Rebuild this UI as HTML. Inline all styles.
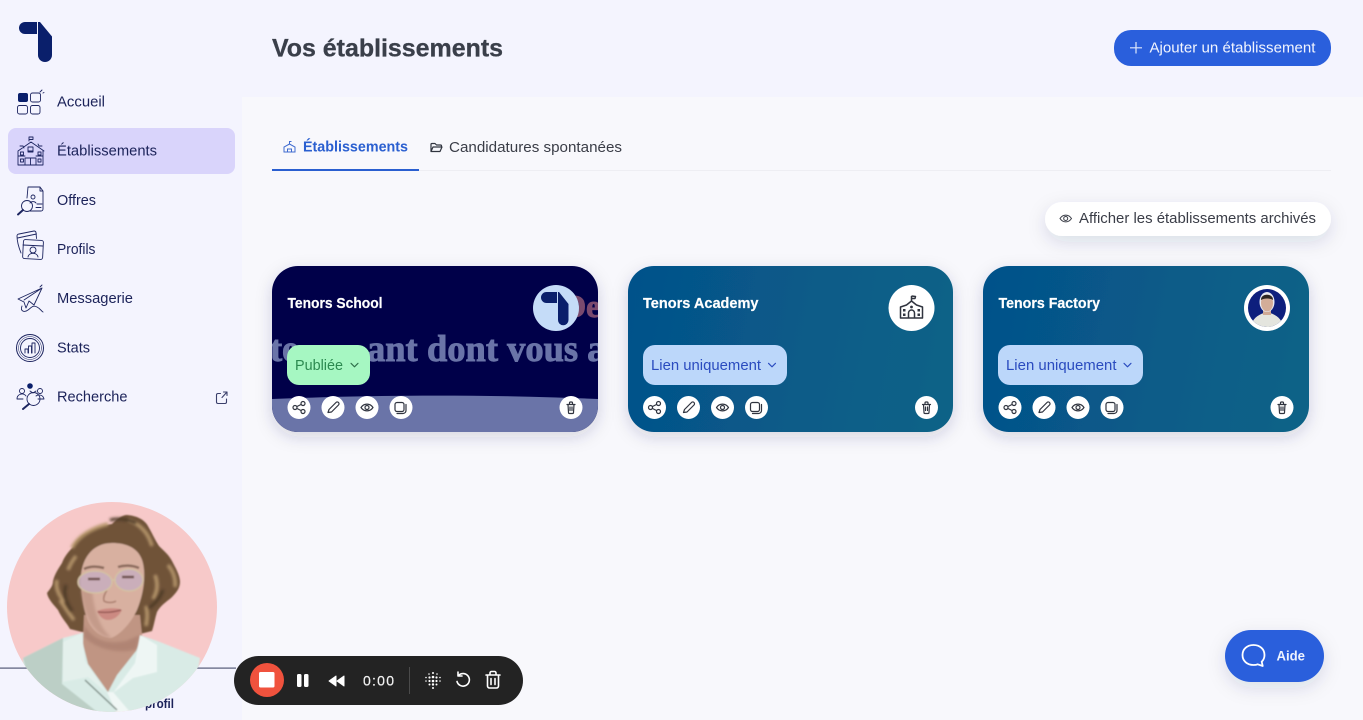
<!DOCTYPE html>
<html lang="fr">
<head>
<meta charset="utf-8">
<title>Vos établissements</title>
<style>
html,body{margin:0;padding:0;width:1363px;height:720px;overflow:hidden;background:#f4f4fe}
svg{display:block;position:absolute;left:0;top:0}
text{font-family:"Liberation Sans",sans-serif}
.nav{font-size:15px;fill:#1b2259}
.ic{fill:none;stroke:#1d2560;stroke-width:.9;stroke-linejoin:round;stroke-linecap:round}
.ac{fill:none;stroke:#30343f;stroke-width:1.2;stroke-linejoin:round;stroke-linecap:round}
.srf{font-family:"Liberation Serif",serif;font-weight:700;stroke-width:.9}
</style>
</head>
<body>
<svg width="1363" height="720" viewBox="0 0 1363 720" xmlns="http://www.w3.org/2000/svg">
<defs>
<linearGradient id="cg" x1="0" y1="0" x2="1" y2="0.1"><stop offset="0" stop-color="#05518a"/><stop offset="1" stop-color="#0a6287"/></linearGradient>
<filter id="sh" x="-20%" y="-20%" width="140%" height="150%"><feDropShadow dx="0" dy="5" stdDeviation="8" flood-color="#1c2a55" flood-opacity=".17"/></filter>
<filter id="sh2" x="-20%" y="-80%" width="140%" height="300%"><feDropShadow dx="0" dy="6" stdDeviation="9" flood-color="#1c2a55" flood-opacity=".13"/></filter>
<filter id="b1"><feGaussianBlur stdDeviation="1.300"/></filter>
<filter id="b2"><feGaussianBlur stdDeviation=".7"/></filter>
<clipPath id="c1"><rect x="272" y="266" width="326" height="166" rx="26"/></clipPath>
<clipPath id="vid"><circle cx="112" cy="607" r="105"/></clipPath>
<clipPath id="c3"><circle cx="1267" cy="308" r="19"/></clipPath>
<g id="acts">
  <circle cx="27" cy="0" r="11.500" fill="#fff"/><circle cx="61" cy="0" r="11.500" fill="#fff"/><circle cx="95" cy="0" r="11.500" fill="#fff"/><circle cx="129" cy="0" r="11.500" fill="#fff"/><circle cx="299" cy="0" r="11.500" fill="#fff"/>
  <g class="ac">
    <circle cx="23" cy="0" r="2"/><circle cx="31" cy="-4" r="2"/><circle cx="31" cy="4" r="2"/><path d="M25-1l4-2M25 1l4 2"/>
    <path d="M56 5l1-3 7-7a1.500 1.500 0 0 1 2.500 2.500l-7 7z"/>
    <path d="M89 0c3-4.500 9-4.500 12 0c-3 4.500-9 4.500-12 0z"/><circle cx="95" cy="0" r="2"/>
    <rect x="123" y="-5" width="9" height="9" rx="2"/><path d="M134-3v6a3 3 0 0 1-3 3h-6"/>
    <path d="M295-3h8M297.500-3v-1.500a1 1 0 0 1 1-1h1a1 1 0 0 1 1 1V-3M296-3l.5 8a1 1 0 0 0 1 1h3a1 1 0 0 0 1-1l.5-8M298 -.5v3.500M300-.5v3.500"/>
  </g>
</g>
<path id="chev" d="M-3.500-1.700l3.500 3.500 3.500-3.500" fill="none" stroke-width="1.100" stroke-linecap="round" stroke-linejoin="round"/>
</defs>

<!-- backgrounds -->
<rect width="1363" height="720" fill="#f4f4fe"/>
<rect x="242" y="97" width="1121" height="623" fill="#f8f8fc"/>

<!-- logo -->
<path d="M25 22h12v12H25a6 6 0 0 1 0-12z" fill="#0a1f6b"/>
<path d="M38 22h2l12 14.500v18.500a7 7 0 0 1-14 0z" fill="#0a1f6b"/>

<!-- sidebar -->
<rect x="8" y="128" width="227" height="46" rx="8" fill="#d9d4fb"/>
<text class="nav" x="57" y="106.500" textLength="48" lengthAdjust="spacingAndGlyphs">Accueil</text>
<text class="nav" x="57" y="155.500" textLength="100" lengthAdjust="spacingAndGlyphs">Établissements</text>
<text class="nav" x="57" y="205" textLength="39" lengthAdjust="spacingAndGlyphs">Offres</text>
<text class="nav" x="57" y="254" textLength="38.500" lengthAdjust="spacingAndGlyphs">Profils</text>
<text class="nav" x="57" y="303" textLength="76" lengthAdjust="spacingAndGlyphs">Messagerie</text>
<text class="nav" x="57" y="352.500" textLength="33" lengthAdjust="spacingAndGlyphs">Stats</text>
<text class="nav" x="57" y="401.500" textLength="70.500" lengthAdjust="spacingAndGlyphs">Recherche</text>

<!-- nav icons -->
<rect x="18" y="93" width="10" height="9" rx="2" fill="#0a1f6b"/>
<g class="ic">
<rect x="30.500" y="93" width="10" height="9" rx="2"/><rect x="17.500" y="105.500" width="10" height="8.500" rx="2"/><rect x="30.500" y="105.500" width="9.500" height="8.500" rx="2"/>
<path d="M40 92l2-2M43 93l1-.5"/>
<!-- school -->
<path d="M29 141v-4h4v2.500h-4M18 151l13-9 13 9M20 146h3l1 2M42 146h-3l-1-2M18 151v14h25v-14M25 165v-7h11v7M30.500 158v7M28 151h5M18 156h7M36 156h7"/>
<rect x="28" y="147" width="5" height="5"/><rect x="20.500" y="152" width="3" height="3"/><rect x="38" y="152" width="3" height="3"/><rect x="20.500" y="159" width="3" height="3"/><rect x="38" y="159" width="3" height="3"/>
<!-- offres -->
<path d="M27 198l1-11h12l3 4v18a2 2 0 0 1-2 2H30M40 187v4h3"/><path d="M31 197a2 2 0 1 1 4 0 2 2 0 1 1-4 0M30 203a3.500 3 0 0 1 6 0M37 204h5M36 207.500h5"/>
<circle cx="27" cy="206" r="5.500"/><path d="M23 210l-5 4.500" stroke-width="2"/>
<!-- profils -->
<path d="M21 253c-2-5-4-12-4-17a2 2 0 0 1 2-2l15-3a2 2 0 0 1 2 1.500l.5 6M17.500 238l19-4"/>
<rect x="23" y="240" width="20" height="19" rx="2" transform="rotate(3 33 250)"/><path d="M23 245l20 1"/><circle cx="33" cy="250" r="3"/><path d="M28 257c1-5 9-5 10 0"/>
<!-- messagerie -->
<path d="M18 299l24-11-8 17-5-4-3 7-2-6zM42 288l-18 12M40 287l2-2M22 306c-2 5 2 7 6 4s5-5 9-3 4 4 6 5"/>
<!-- stats -->
<circle cx="30" cy="348" r="13.500" stroke-width="1"/><circle cx="30" cy="348" r="9.500"/><circle cx="30" cy="348" r="11.500" stroke-width=".5"/>
<path d="M25 353v-4h3v4M28.500 353v-7h3v7M32 353v-10h3v10"/>
<!-- recherche -->
<circle cx="22" cy="391" r="2.500"/><circle cx="40" cy="391" r="2.500"/><path d="M17 399a5 5 0 0 1 9-3M36 396a5 5 0 0 1 8 3h-6M17 399h6"/>
<circle cx="33.500" cy="399" r="6.500"/><path d="M29 404l-6 5" stroke-width="2"/><path d="M30 391l3 2 3-2"/>
</g>
<circle cx="30" cy="386" r="2.800" fill="#0a1f6b"/>
<g fill="none" stroke="#3a3f6b" stroke-width="1.100" stroke-linecap="round" stroke-linejoin="round"><path d="M220.500 393.500H218a1.500 1.500 0 0 0-1.500 1.500v7a1.500 1.500 0 0 0 1.500 1.500h7a1.500 1.500 0 0 0 1.500-1.500v-3M222 397.500l5-5.500M223.500 392h3.500v3.500"/></g>

<!-- header -->
<text x="272" y="56.500" font-size="25" font-weight="700" fill="#3a3f4a" stroke="#3a3f4a" stroke-width=".3" textLength="231" lengthAdjust="spacingAndGlyphs">Vos établissements</text>
<rect x="1114" y="30" width="217" height="36" rx="17" fill="#2a5fdc"/>
<path d="M1136 42v11.500M1130 47.800h12" stroke="#dfe8fb" stroke-width="1.200"/>
<text x="1149.500" y="52.500" font-size="15" fill="#f2f5fe" textLength="166" lengthAdjust="spacingAndGlyphs">Ajouter un établissement</text>

<!-- tabs -->
<rect x="272" y="170" width="1059" height="1" fill="#eeeef3"/>
<rect x="272" y="169" width="147" height="2" fill="#2a5fd0"/>
<g fill="none" stroke="#3f6bd0" stroke-width="1"><path d="M284 152v-5l5.500-3 5.500 3v5zM289.500 144v-2.500h2M287.500 152v-3h4v3"/></g>
<text x="303" y="151.500" font-size="15" font-weight="700" fill="#2a5fd0" textLength="105" lengthAdjust="spacingAndGlyphs">Établissements</text>
<g fill="none" stroke="#30343f" stroke-width="1.200" stroke-linejoin="round"><path d="M431 151.500v-7a1 1 0 0 1 1-1h3l1.500 1.500h4a1 1 0 0 1 1 1v1M431 151.500l2-4.500h9l-2 4.500z"/></g>
<text x="449" y="152" font-size="15" fill="#3a3d47" textLength="173" lengthAdjust="spacingAndGlyphs">Candidatures spontanées</text>

<!-- archived -->
<rect x="1045" y="202" width="286" height="34" rx="17" fill="#fff" filter="url(#sh2)"/>
<g fill="none" stroke="#3a3d47" stroke-width="1"><path d="M1060 218.500c3-4.500 8.500-4.500 11.500 0c-3 4.500-8.500 4.500-11.500 0z"/><circle cx="1065.700" cy="218.500" r="2"/></g>
<text x="1079" y="223" font-size="15" fill="#3a3d47" textLength="237" lengthAdjust="spacingAndGlyphs">Afficher les établissements archivés</text>

<!-- card 1 -->
<rect x="272" y="266" width="326" height="166" rx="26" fill="#03034a" filter="url(#sh)"/>
<g clip-path="url(#c1)">
<path d="M272 399C370 395 480 394 598 399V432H272z" fill="#6a74a8"/>
<text class="srf" x="270" y="361" font-size="36.500" fill="#6a74a8" stroke="#6a74a8">te</text>
<text class="srf" x="367" y="361" font-size="36.500" fill="#6a74a8" stroke="#6a74a8">ant</text>
<text class="srf" x="427" y="361" font-size="36.500" fill="#6a74a8" stroke="#6a74a8">dont vous a</text>
<text class="srf" x="563" y="317" font-size="32" fill="#7a4a6e" stroke="#7a4a6e">De</text>
</g>
<text x="287.500" y="308" font-size="14.500" font-weight="700" fill="#fff" stroke="#fff" stroke-width=".2" textLength="95" lengthAdjust="spacingAndGlyphs">Tenors School</text>
<circle cx="556" cy="308" r="23" fill="#c5dcf8"/>
<path d="M546.500 292h10.500v11h-10.500a5.500 5.500 0 0 1 0-11z" fill="#0a1f6b"/>
<path d="M558 292h1l9.500 12v16a5.250 5.250 0 0 1-10.500 0z" fill="#0a1f6b"/>
<rect x="287" y="345" width="83" height="40" rx="12" fill="#a6f7c2"/>
<text x="295" y="370" font-size="15" fill="#2c8a50" textLength="48" lengthAdjust="spacingAndGlyphs">Publiée</text>
<use href="#chev" x="354.500" y="365" stroke="#2f6f4a"/>
<use href="#acts" x="272" y="407.500"/>

<!-- card 2 -->
<rect x="628" y="266" width="325" height="166" rx="26" fill="url(#cg)" filter="url(#sh)"/>
<text x="643" y="308" font-size="14.500" font-weight="700" fill="#fff" stroke="#fff" stroke-width=".2" textLength="115.500" lengthAdjust="spacingAndGlyphs">Tenors Academy</text>
<circle cx="911.500" cy="308" r="23" fill="#fff"/>
<g fill="none" stroke="#30343f" stroke-width="1.500" stroke-linejoin="round"><path d="M900.500 318v-11l6-2 5-4 5 4 6 2v11zM911.500 301v-5M911.500 296l4 .5-.5 2h-3.500M908.500 318v-5a3 3 0 0 1 6 0v5"/></g>
<g fill="#30343f"><rect x="903" y="309" width="2.500" height="2.500"/><rect x="903" y="313.500" width="2.500" height="2.500"/><rect x="917.500" y="309" width="2.500" height="2.500"/><rect x="917.500" y="313.500" width="2.500" height="2.500"/><circle cx="911.500" cy="307" r="1.400"/></g>
<rect x="643" y="345" width="144" height="40" rx="12" fill="#bcd7fa"/>
<text x="651" y="370" font-size="15" fill="#2a4bbf" textLength="110" lengthAdjust="spacingAndGlyphs">Lien uniquement</text>
<use href="#chev" x="772" y="365" stroke="#2a4bbf"/>
<use href="#acts" x="627.500" y="407.500"/>

<!-- card 3 -->
<rect x="983" y="266" width="326" height="166" rx="26" fill="url(#cg)" filter="url(#sh)"/>
<text x="998.500" y="308" font-size="14.500" font-weight="700" fill="#fff" stroke="#fff" stroke-width=".2" textLength="101.500" lengthAdjust="spacingAndGlyphs">Tenors Factory</text>
<circle cx="1267" cy="308" r="23" fill="#fff"/>
<circle cx="1267" cy="308" r="19" fill="#0d1f7d"/>
<g clip-path="url(#c3)">
<path d="M1250 330c1-10 7-15 14-17h6c7 2 13 7 14 17z" fill="#e4e5de"/>
<rect x="1263" y="308" width="8" height="7" fill="#cfa994"/>
<ellipse cx="1267" cy="302" rx="7.500" ry="10" fill="#e8eaf2"/>
<ellipse cx="1267" cy="303" rx="6" ry="8.500" fill="#d3ad98"/>
<path d="M1261 300c-.5-7 12.500-7 12 0-3-2-9-2-12 0z" fill="#2c2522"/>
</g>
<rect x="998" y="345" width="145" height="40" rx="12" fill="#bcd7fa"/>
<text x="1006" y="370" font-size="15" fill="#2a4bbf" textLength="110.500" lengthAdjust="spacingAndGlyphs">Lien uniquement</text>
<use href="#chev" x="1127.500" y="365" stroke="#2a4bbf"/>
<use href="#acts" x="983" y="407.500"/>

<!-- sidebar bottom -->
<rect x="0" y="667.500" width="236" height="1.200" fill="#555a78"/>
<text x="145" y="708" font-size="12.500" font-weight="700" fill="#1b2259" textLength="29" lengthAdjust="spacingAndGlyphs">profil</text>

<!-- video bubble -->
<circle cx="112" cy="607" r="105" fill="#f7c9c9"/>
<g clip-path="url(#vid)">
<g filter="url(#b2)">
<!-- hair -->
<path d="M127 515c12 1 19 6 22 13 4 7 6 12 10 18 5 5 10 9 13 15 3 6 8 14 8 21 0 7-5 12-9 16-5 4-11 8-14 14-2 6-3 13-5 19l-12 3-58-2-12-3c-3-6-8-10-12-19-5-6-10-11-11-17 3-4 6-7 6-12 2-8 6-13 9-18 2-6 7-12 11-16 2-6 8-12 15-15 8-5 18-7 24-8 5-5 10-9 15-9z" fill="#6f5238"/>
<path d="M72 548c6-12 20-20 36-24M128 520c12 4 20 12 24 26M57 580c-2 8 2 16 8 22M60 600c4 6 8 12 14 20M168 565c5 6 8 14 7 22M155 575c3 8 3 16-2 24M146 606c2 8 1 14 0 20M68 570c2-6 5-10 8-14" fill="none" stroke="#b5956b" stroke-width="3.500" filter="url(#b1)"/>
<path d="M66 585c-3 8 0 18 6 26M163 590c-3 8-8 14-14 18M110 520c8-2 18-1 26 3" fill="none" stroke="#4e3a28" stroke-width="3" filter="url(#b1)"/>
<!-- shirt -->
<path d="M23 658l40-20 19-5 58 2 20 7 40 16-10 70H20z" fill="#d9ebe6"/>
<path d="M23 658l40-20-1 46 48 38H40z" fill="#bccfc6"/>
<!-- neck -->
<path d="M84 615h56l2 20-6 16-19 24-9 17-20-28-5-20z" fill="#c09583"/>
<path d="M84 625c8 14 22 20 42 16l14-6-3 14c-10 4-36 4-53-12z" fill="#a67a6b" opacity=".6" filter="url(#b1)"/>
<!-- collar -->
<path d="M82 633l-19 9v40l25-5 19 16-22-32z" fill="#e4f0ec"/>
<path d="M140 635l17 10v27l-24 6-20 15 22-30z" fill="#eef6f4"/>
<path d="M107 692l11 24 12-4-17-20z" fill="#f0f7f5"/>
<path d="M85 680l32 30" stroke="#75857e" stroke-width="1.300" fill="none"/>
<!-- face -->
<path d="M112 543c20 0 31 9 32 27 1 14-2 28-7 40-6 13-17 25-26 28-8 0-18-6-23-17-4-10-6-22-7-35-2-22 8-43 31-43z" fill="#d8b0a0"/>
<path d="M81 590c2 20 9 40 25 47l6 1c-11-8-18-26-20-48z" fill="#b78c7c" opacity=".6" filter="url(#b1)"/>
<!-- mouth -->
<path d="M97 611c6-3 20-4 25-1-3 6-8 10-14 10-5 0-9-4-11-9z" fill="#cc8a82"/>
<path d="M98 612c8 1 16 0 23-2" fill="none" stroke="#8c4f4b" stroke-width="1.200"/>
<!-- nose -->
<path d="M107 590c-3 5-4 8-3 11 3 2 9 2 12 0" fill="none" stroke="#aa7e6e" stroke-width="1.500"/>
<!-- eyebrows -->
<path d="M84 569c6-3 13-3 20-1M118 567c6-2 14-2 21 1" stroke="#8a6a5c" stroke-width="2.500" fill="none"/>
<!-- glasses -->
<ellipse cx="95" cy="582" rx="17" ry="11" fill="#c9aebc" opacity=".9"/>
<ellipse cx="129" cy="580" rx="14" ry="11" fill="#c9aebc" opacity=".9"/>
<ellipse cx="95" cy="582" rx="17" ry="11" fill="none" stroke="#d4c3a2" stroke-width="1.300"/>
<ellipse cx="129" cy="580" rx="14" ry="11" fill="none" stroke="#d4c3a2" stroke-width="1.300"/>
<path d="M112 580h3" stroke="#d4c3a2" stroke-width="1.500"/>
<path d="M88 579h12M122 577h12" stroke="#6e5350" stroke-width="2.500"/>
</g>
</g>

<!-- recorder -->
<rect x="234" y="656" width="289" height="49" rx="24.500" fill="#232323"/>
<circle cx="267" cy="680" r="17" fill="#f0523d"/>
<rect x="259" y="672" width="15.500" height="15.500" rx="1.500" fill="#fff"/>
<rect x="297" y="674" width="4.500" height="13" rx="1.500" fill="#fff"/>
<rect x="304" y="674" width="4.500" height="13" rx="1.500" fill="#fff"/>
<path d="M329 681l7-5v10zM337 681l7-5v10z" fill="#fff" stroke="#fff" stroke-width="1" stroke-linejoin="round"/>
<text x="363" y="685.500" font-size="14" fill="#f2f2f2" stroke="#f2f2f2" stroke-width=".2" textLength="31" lengthAdjust="spacing">0:00</text>
<rect x="409" y="667" width="1" height="27" fill="#4a4a4a"/>
<g fill="#fff">
<circle cx="429" cy="674" r=".8"/><circle cx="433" cy="673" r="1"/><circle cx="437" cy="674" r=".8"/>
<circle cx="426" cy="677.500" r=".8"/><circle cx="429.500" cy="677.500" r="1.100"/><circle cx="433" cy="677" r="1.300"/><circle cx="436.500" cy="677.500" r="1.100"/><circle cx="440" cy="677.500" r=".8"/>
<circle cx="426" cy="681" r=".8"/><circle cx="429.500" cy="681" r="1.100"/><circle cx="433" cy="681" r="1.300"/><circle cx="436.500" cy="681" r="1.100"/><circle cx="440" cy="681" r=".8"/>
<circle cx="429.500" cy="684.500" r="1"/><circle cx="433" cy="684.500" r="1.200"/><circle cx="436.500" cy="684.500" r="1"/>
<circle cx="433" cy="688" r="1"/>
</g>
<g fill="none" stroke="#fff" stroke-width="1.600" stroke-linecap="round" stroke-linejoin="round">
<path d="M458.500 675.500a6.300 6.300 0 1 1-1.500 6M458 672v4h4"/>
<path d="M486 675h14M490 675v-2a1.500 1.500 0 0 1 1.500-1.500h3a1.500 1.500 0 0 1 1.500 1.500v2M487.500 675v11a2 2 0 0 0 2 2h7a2 2 0 0 0 2-2v-11M491 678.500v6M495 678.500v6"/>
</g>

<!-- aide -->
<rect x="1225" y="630" width="99" height="52" rx="26" fill="#2a5fdc" filter="url(#sh2)"/>
<path d="M1253.500 645c-6.500 0-11 4.200-11 10s4.500 10 11 10c1.500 0 3-.2 4.200-.7l5 1.700-1-4.300c1.800-1.700 2.800-4 2.800-6.700 0-5.800-4.500-10-11-10z" fill="none" stroke="#fff" stroke-width="1.800" stroke-linejoin="round"/>
<text x="1276.500" y="660.500" font-size="13.500" font-weight="700" fill="#eef3fe" textLength="28.500" lengthAdjust="spacingAndGlyphs">Aide</text>
</svg>
</body>
</html>
